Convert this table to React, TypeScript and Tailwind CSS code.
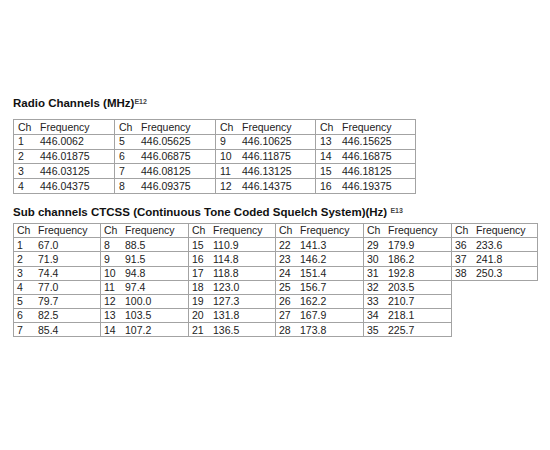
const radio = [
  ['1', '446.0062'], ['2', '446.01875'], ['3', '446.03125'], ['4', '446.04375'],
  ['5', '446.05625'], ['6', '446.06875'], ['7', '446.08125'], ['8', '446.09375'],
  ['9', '446.10625'], ['10', '446.11875'], ['11', '446.13125'], ['12', '446.14375'],
  ['13', '446.15625'], ['14', '446.16875'], ['15', '446.18125'], ['16', '446.19375'],
];

const ctcss = [
  '67.0', '71.9', '74.4', '77.0', '79.7', '82.5', '85.4',
  '88.5', '91.5', '94.8', '97.4', '100.0', '103.5', '107.2',
  '110.9', '114.8', '118.8', '123.0', '127.3', '131.8', '136.5',
  '141.3', '146.2', '151.4', '156.7', '162.2', '167.9', '173.8',
  '179.9', '186.2', '192.8', '203.5', '210.7', '218.1', '225.7',
  '233.6', '241.8', '250.3',
].map((f, i) => [String(i + 1), f]);

function chunk<T>(list: T[], size: number) {
  const out: T[][] = [];
  for (let i = 0; i < list.length; i += size) out.push(list.slice(i, i + size));
  return out;
}

// one bordered block of "Ch / Frequency" rows
function Block({
  rows,
  width,
  first,
  chClass,
  rowClass,
}: {
  rows: string[][];
  width: string;
  first: boolean;
  chClass: string;
  rowClass: string;
}) {
  return (
    <div className={`${width} flex-none self-start border-r border-t border-[#a3a3a3] ${first ? 'border-l' : ''}`}>
      {[['Ch', 'Frequency'], ...rows].map(([ch, freq], i) => (
        <div key={i} className={`${rowClass} flex items-center border-b border-[#a3a3a3]`}>
          <span className={chClass}>{ch}</span>
          <span>{freq}</span>
        </div>
      ))}
    </div>
  );
}

export default function App() {
  const radioWidths = ['w-[102px]', 'w-[101px]', 'w-[100px]', 'w-[100px]'];
  const ctcssWidths = ['w-[88px]', 'w-[88px]', 'w-[87px]', 'w-[88px]', 'w-[88px]', 'w-[86px]'];

  return (
    <div className="h-[450px] w-[550px] bg-white pl-[13px] pt-[95px] font-['Liberation_Sans',Arial,sans-serif] text-[#222]">
      <h2 className="h-[14px] text-[11.5px] leading-[14px] font-bold text-[#111]">
        Radio Channels (MHz)<span className="align-[3px] text-[7px] font-bold text-[#444]">E12</span>
      </h2>

      <div className="mt-[10px] flex text-[10.5px] leading-none">
        {chunk(radio, 4).map((rows, i) => (
          <Block
            key={i}
            rows={rows}
            first={i === 0}
            width={radioWidths[i]}
            chClass="w-[26px] flex-none pl-[4px]"
            rowClass="h-[14.8px]"
          />
        ))}
      </div>

      <h2 className="mt-[10px] h-[14px] text-[11.5px] leading-[14px] font-bold text-[#111]">
        Sub channels CTCSS (Continuous Tone Coded Squelch System)(Hz){' '}
        <span className="align-[3px] text-[7px] font-bold text-[#444]">E13</span>
      </h2>

      <div className="mt-[5px] flex text-[10.5px] leading-none">
        {chunk(ctcss, 7).map((rows, i) => (
          <Block
            key={i}
            rows={rows}
            first={i === 0}
            width={ctcssWidths[i]}
            chClass="w-[24px] flex-none pl-[3px]"
            rowClass="h-[14.2px]"
          />
        ))}
      </div>
    </div>
  );
}
